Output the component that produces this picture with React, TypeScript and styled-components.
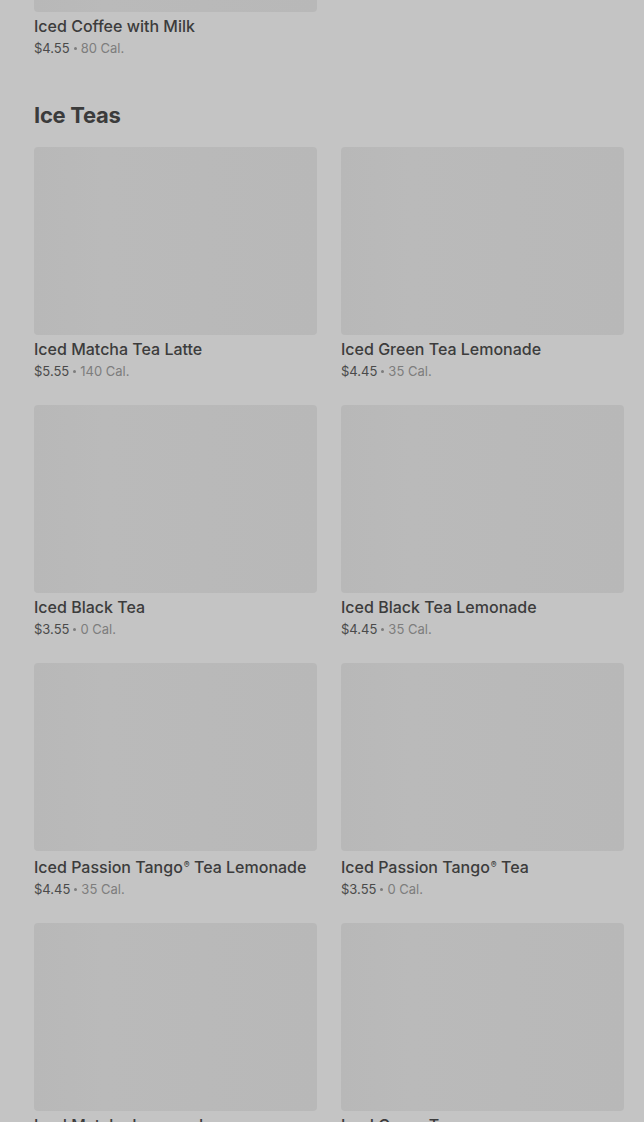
import React from "react";
import styled, { createGlobalStyle } from "styled-components";

const Global = createGlobalStyle`
  html, body { margin: 0; padding: 0; background: #c4c4c4; }
  body { font-family: Inter, Roboto, "Liberation Sans", Arial, sans-serif; overflow: hidden; }
`;

const Page = styled.main`
  margin-top: -176px;
  padding: 0 20px 0 34px;
`;

const Section = styled.section`
  display: flex;
  flex-direction: column;
`;

const Heading = styled.h2`
  margin: 43px 0 17px;
  font-size: 22px;
  line-height: 30px;
  font-weight: 700;
  color: #3b3b3b;
  letter-spacing: -0.3px;
`;

const Grid = styled.div`
  display: grid;
  grid-template-columns: repeat(2, 283px);
  column-gap: 24px;
  row-gap: 25px;
`;

const Card = styled.article`
  display: flex;
  flex-direction: column;
`;

const Thumb = styled.div`
  height: 188px;
  border-radius: 4px;
  background: linear-gradient(90deg, #b8b8b8 0%, #bababa 25%, #b9b9b9 60%, #b8b8b8 100%);
`;

const Title = styled.h3`
  margin: 4px 0 0;
  font-size: 16px;
  line-height: 20px;
  font-weight: 500;
  color: #3c3c3c;
  letter-spacing: 0;
`;

const Sup = styled.span`
  font-size: 0.55em;
  vertical-align: 0.55em;
  margin-left: 1px;
`;

const Meta = styled.p`
  margin: 3px 0 0;
  font-size: 13px;
  line-height: 18px;
  color: #7d7d7d;
  display: flex;
  align-items: center;
`;

const Price = styled.span`
  color: #4a4a4a;
`;

const Dot = styled.span`
  display: inline-block;
  width: 3px;
  height: 3px;
  border-radius: 50%;
  background: #7d7d7d;
  margin: 1px 4px 0;
`;

type Item = { name: string; price: string; cal: string };

const prev: Item[] = [{ name: "Iced Coffee with Milk", price: "$4.55", cal: "80 Cal." }];

const teas: Item[] = [
  { name: "Iced Matcha Tea Latte", price: "$5.55", cal: "140 Cal." },
  { name: "Iced Green Tea Lemonade", price: "$4.45", cal: "35 Cal." },
  { name: "Iced Black Tea", price: "$3.55", cal: "0 Cal." },
  { name: "Iced Black Tea Lemonade", price: "$4.45", cal: "35 Cal." },
  { name: "Iced Passion Tango® Tea Lemonade", price: "$4.45", cal: "35 Cal." },
  { name: "Iced Passion Tango® Tea", price: "$3.55", cal: "0 Cal." },
  { name: "Iced Matcha Lemonade", price: "$4.45", cal: "35 Cal." },
  { name: "Iced Green Tea", price: "$3.55", cal: "0 Cal." },
];

const renderName = (name: string) => {
  const parts = name.split("®");
  return parts.map((p, i) => (
    <React.Fragment key={i}>
      {p}
      {i < parts.length - 1 && <Sup>®</Sup>}
    </React.Fragment>
  ));
};

const ProductCard = ({ item }: { item: Item }) => (
  <Card>
    <Thumb />
    <Title>{renderName(item.name)}</Title>
    <Meta>
      <Price>{item.price}</Price>
      <Dot aria-hidden="true" />
      <span>{item.cal}</span>
    </Meta>
  </Card>
);

export default function App() {
  return (
    <>
      <Global />
      <Page>
        <Section>
          <Grid>
            {prev.map((i) => (
              <ProductCard key={i.name} item={i} />
            ))}
          </Grid>
        </Section>
        <Section>
          <Heading>Ice Teas</Heading>
          <Grid>
            {teas.map((i) => (
              <ProductCard key={i.name} item={i} />
            ))}
          </Grid>
        </Section>
      </Page>
    </>
  );
}
